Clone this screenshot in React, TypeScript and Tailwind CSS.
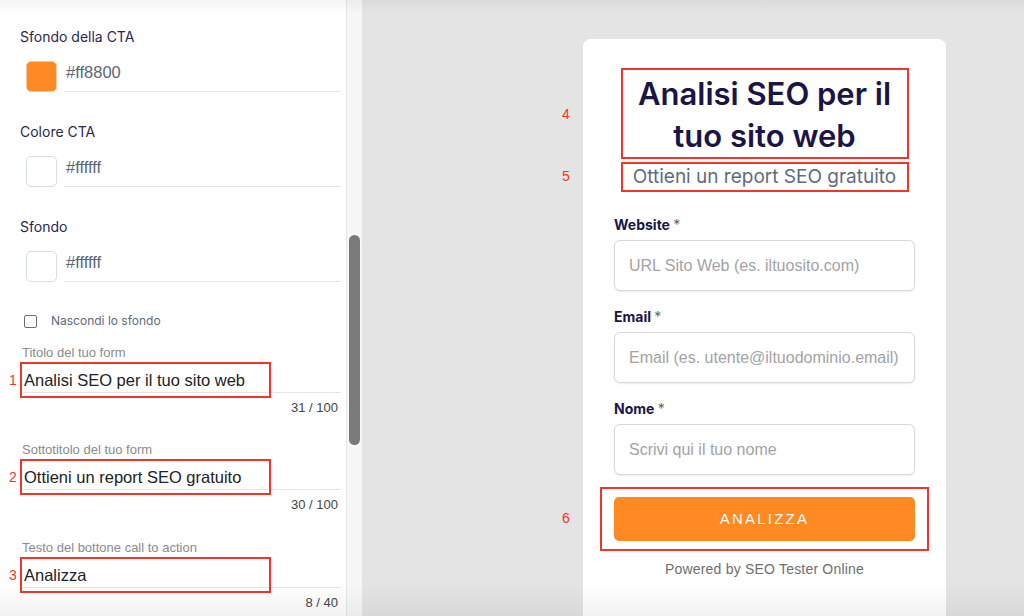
const sans = "font-['Inter','Noto_Sans',sans-serif]";
const helv = "font-['Liberation_Sans','Arial',sans-serif]";

const Marker = ({ n, className }: { n: string; className: string }) => (
  <span className={`absolute text-[14px] leading-[16px] text-[#f0352a] ${helv} ${className}`}>{n}</span>
);

const ColorRow = ({ label, hex, swatch, first }: { label: string; hex: string; swatch: string; first?: boolean }) => (
  <div className={first ? '' : 'mt-[30px]'}>
    <div className={`${sans} text-[14px] leading-[20px] text-[#2b2650]`}>{label}</div>
    <div className="mt-[14px] flex items-start">
      <div className={`ml-[6px] h-[31px] w-[31px] rounded-[5px] border border-[#d5dde6] ${swatch}`} />
      <div className={`ml-[7px] h-[31px] flex-1 border-b border-[#e4e6ea] pl-[2px] ${helv} text-[16.5px] leading-[22px] text-[#5c6575]`}>
        {hex}
      </div>
    </div>
  </div>
);

const TextField = ({ label, value, count, n, top }: { label: string; value: string; count: string; n: string; top: string }) => (
  <div className={top}>
    <div className={`ml-[2px] ${helv} text-[13px] leading-[16px] text-[#8a8a8a]`}>{label}</div>
    <div className="relative ml-[2px] flex h-[32px] items-end border-b border-[#e6e6e6] pb-[2px]">
      <span className={`pl-[2px] ${helv} text-[16.5px] leading-[20px] text-[#222]`}>{value}</span>
      <div className="pointer-events-none absolute left-[-2px] top-[1px] h-[36px] w-[251px] border-2 border-[#f0352a]" />
      <Marker n={n} className="left-[-13px] top-[11px]" />
    </div>
    <div className={`mt-[7px] pr-[3px] text-right ${helv} text-[13px] leading-[16px] text-[#444]`}>{count}</div>
  </div>
);

const FormField = ({ label, placeholder, top }: { label: string; placeholder: string; top: string }) => (
  <div className={top}>
    <div className={`${sans} text-[14px] font-bold leading-[20px] text-[#1b1547]`}>
      {label} <span className="font-normal text-[#666]">*</span>
    </div>
    <div className={`mt-[5px] flex h-[51px] items-center rounded-[6px] border border-[#d9d9d9] bg-white pl-[14px] shadow-[0_1px_2px_rgba(0,0,0,0.08)] ${helv} text-[16px] text-[#a3a3a3]`}>
      {placeholder}
    </div>
  </div>
);

export default function App() {
  return (
    <div className="relative flex h-[616px] w-[1024px] overflow-hidden bg-[#e4e4e4]">
      <aside className="h-full w-[346px] bg-white pl-[20px] pr-[5px] pt-[27px]">
        <ColorRow first label="Sfondo della CTA" hex="#ff8800" swatch="bg-[#ff8a24] border-[#f5c9a0]" />
        <ColorRow label="Colore CTA" hex="#ffffff" swatch="bg-white" />
        <ColorRow label="Sfondo" hex="#ffffff" swatch="bg-white" />

        <div className="mt-[29px] flex h-[20px] items-center">
          <div className="ml-[4px] h-[13px] w-[13px] rounded-[2px] border border-[#6e6e6e]" />
          <span className={`ml-[14px] ${sans} text-[12px] text-[#5f6a7d]`}>Nascondi lo sfondo</span>
        </div>

        <TextField top="mt-[14px]" label="Titolo del tuo form" value="Analisi SEO per il tuo sito web" count="31 / 100" n="1" />
        <TextField top="mt-[26px]" label="Sottotitolo del tuo form" value="Ottieni un report SEO gratuito" count="30 / 100" n="2" />
        <TextField top="mt-[27px]" label="Testo del bottone call to action" value="Analizza" count="8 / 40" n="3" />
      </aside>

      <div className="h-full w-[16px] border-l border-[#e8e8e8] bg-[#f7f7f7] pl-[2px] pt-[235px]">
        <div className="h-[210px] w-[11px] rounded-full bg-[#7a7a7a]" />
      </div>

      <main className="relative h-full flex-1 pl-[221px] pt-[39px]">
        <div className="relative w-[363px] rounded-[8px] bg-white px-[31px] pb-[60px] pt-[29px]">
          <Marker n="4" className="left-[-21px] top-[67px]" />
          <Marker n="5" className="left-[-21px] top-[129px]" />
          <Marker n="6" className="left-[-21px] top-[471px]" />

          <div className="mx-auto w-[288px]">
            <h1 className={`border-2 border-[#f0352a] pt-[3px] text-center ${sans} text-[31px] font-semibold leading-[42px] text-[#1b1547]`}>
              Analisi SEO per il
              <br />
              tuo sito web
            </h1>
            <p className={`mt-[3px] border-2 border-[#f0352a] text-center ${sans} text-[19px] leading-[26px] text-[#5f6b7e]`}>
              Ottieni un report SEO gratuito
            </p>
          </div>

          <FormField top="mt-[23px]" label="Website" placeholder="URL Sito Web (es. iltuosito.com)" />
          <FormField top="mt-[16px]" label="Email" placeholder="Email (es. utente@iltuodominio.email)" />
          <FormField top="mt-[16px]" label="Nome" placeholder="Scrivi qui il tuo nome" />

          <div className="relative mt-[22px]">
            <div className="pointer-events-none absolute -bottom-[10px] -left-[14px] -right-[14px] -top-[10px] border-2 border-[#f0352a]" />
            <button className={`flex h-[44px] w-full items-center justify-center rounded-[5px] bg-[#ff8a24] ${helv} text-[15px] tracking-[2.2px] text-white`}>
              ANALIZZA
            </button>
          </div>

          <div className={`mt-[18px] text-center ${helv} text-[14px] leading-[20px] tracking-[0.2px] text-[#6e6e6e]`}>
            Powered by SEO Tester Online
          </div>
        </div>
      </main>

      <div className="pointer-events-none absolute inset-x-0 top-0 h-[14px] bg-gradient-to-b from-black/[0.04] to-transparent" />
      <div className="pointer-events-none absolute inset-x-0 bottom-0 h-[34px] bg-gradient-to-t from-black/[0.05] to-transparent" />
    </div>
  );
}
